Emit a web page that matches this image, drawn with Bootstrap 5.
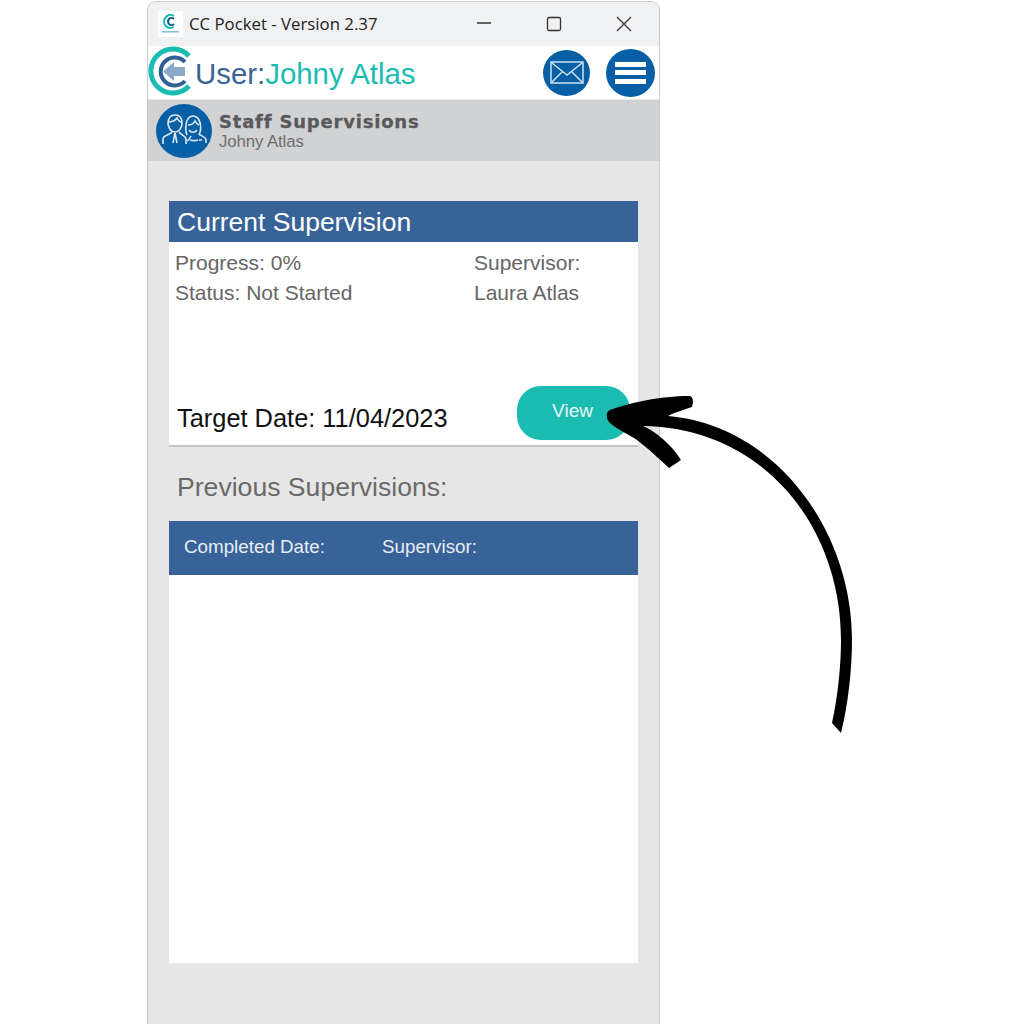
<!DOCTYPE html>
<html lang="en">
<head>
<meta charset="utf-8"/>
<meta content="width=device-width, initial-scale=1.0" name="viewport"/>
<title>CC Pocket - Version 2.37</title>
<link href="https://cdn.jsdelivr.net/npm/bootstrap@5.3.0/dist/css/bootstrap.min.css" rel="stylesheet"/>
<style>
    body {
      background-color: #fff;
      font-family: "Liberation Sans", Arial, sans-serif;
      height: 1024px;
      overflow: hidden;
    }
    .app-window {
      width: 511px;
      height: 1022px;
      margin: 2px 0 0 148px;
      background-color: #e6e6e6;
      border-radius: 8px 8px 0 0;
      box-shadow: 0 0 0 1px #cbcbcb;
      overflow: hidden;
    }
    .title-bar {
      height: 44px;
      background-color: #f0f1f3;
      padding-left: 10px;
      color: #222;
      font-family: "Open Sans", sans-serif;
      font-size: 16.8px;
    }
    .title-logo {
      width: 25px;
      height: 26px;
      background-color: #fff;
      margin-right: 6px;
    }
    .win-btn { width: 70px; height: 44px; }
    .top-head {
      height: 53px;
      background-color: #fff;
      padding-right: 4px;
    }
    .user-label { font-size: 29.4px; color: #3a6496; margin-left: 2px; padding-top: 3px; }
    .user-label span { color: #1abcb1; }
    .round-icon {
      background-color: #0760a5;
      border-radius: 50%;
      flex: none;
    }
    .sub-head {
      height: 62px;
      background-color: #d1d2d4;
      padding-left: 8px;
      border-top: 1px solid #ececec;
    }
    .sub-icon { margin-right: 7px; }
    .sub-text { padding-top: 2px; }
    .sub-title {
      font-family: "DejaVu Sans", sans-serif;
      font-weight: 700;
      font-size: 18px;
      letter-spacing: .8px;
      line-height: 20px;
      color: #58595b;
      -webkit-text-stroke: .3px #58595b;
    }
    .sub-name { font-size: 16.8px; line-height: 18px; margin-top: 1px; color: #6d6e70; letter-spacing: -.1px; }
    .page-body { padding: 40px 21px 0 21px; }
    .panel-head {
      height: 41px;
      background-color: #386398;
      color: #fff;
      font-size: 26.5px;
      padding: 2px 0 0 8px;
    }
    .panel-main {
      height: 205px;
      background-color: #fff;
      border-bottom: 2px solid #c4c4c4;
      color: #666;
      font-size: 21px;
    }
    .info-rows { padding-top: 6px; }
    .info-line { height: 30px; line-height: 30px; }
    .info-left { width: 305px; padding-left: 6px; }
    .target-date { font-size: 25.4px; color: #111; padding: 6px 0 0 8px; }
    .view-btn {
      width: 113px;
      height: 54px;
      margin: 0 8px 5px 0;
      background-color: #1abcb1;
      border: 0;
      border-radius: 24px;
      color: #e8f6f5;
      font-size: 19px;
      padding: 0 2px 4px 0;
    }
    .prev-title { font-size: 26.6px; color: #6a6a6a; margin: 24px 0 18px 8px; line-height: 32px; }
    .table-head {
      height: 54px;
      background-color: #386398;
      color: #e8edf3;
      font-size: 18.8px;
      padding: 0 0 2px 15px;
    }
    .col-completed { width: 198px; }
    .table-body { height: 388px; background-color: #fff; }
    .arrow-layer { position: absolute; left: 0; top: 0; pointer-events: none; }
</style>
</head>
<body>
<div class="app-window d-flex flex-column">
  <div class="title-bar d-flex align-items-center">
    <svg class="title-logo" viewBox="0 0 25 26">
      <path d="M16 5a6.500 6.500 0 1 0 0 11" fill="none" stroke="#1abcb1" stroke-width="2"/>
      <path d="M16 8a3.500 3.500 0 1 0 0 5" fill="none" stroke="#0a5f92" stroke-width="2"/>
      <rect x="4" y="20" width="17" height="1.500" fill="#7fc0d6"/>
    </svg>
    <span class="flex-grow-1">CC Pocket - Version 2.37</span>
    <div class="d-flex">
      <div class="win-btn d-flex align-items-center justify-content-center">
        <svg width="16" height="16" viewBox="0 0 16 16"><path d="M1 7h14" stroke="#333" stroke-width="1.300"/></svg>
      </div>
      <div class="win-btn d-flex align-items-center justify-content-center">
        <svg width="16" height="16" viewBox="0 0 16 16"><rect x="1.500" y="1.500" width="13" height="13" rx="1.500" fill="none" stroke="#333" stroke-width="1.300"/></svg>
      </div>
      <div class="win-btn d-flex align-items-center justify-content-center">
        <svg width="16" height="16" viewBox="0 0 16 16"><path d="M1 1l14 14M15 1L1 15" stroke="#333" stroke-width="1.300"/></svg>
      </div>
    </div>
  </div>
  <div class="top-head d-flex align-items-center">
    <svg width="45" height="53" viewBox="0 0 45 53" class="flex-none">
      <path d="M41 10A22 22 0 1 0 41 40" fill="none" stroke="#1abcb1" stroke-width="5"/>
      <path d="M37 16A14 14 0 1 0 37 35" fill="none" stroke="#2f5f95" stroke-width="4"/>
      <path d="M15 25.500l11-9.500v5h11v9H26v5z" fill="#8aa9cb"/>
    </svg>
    <div class="user-label flex-grow-1">User:<span>Johny Atlas</span></div>
    <svg class="round-icon me-3" width="47" height="46" viewBox="0 0 47 46">
      <rect x="8" y="12" width="32" height="21" fill="none" stroke="#cfe0ee" stroke-width="1.500"/>
      <path d="M9 13l15 12 15-12M9 32l10-10M39 32L29 22" fill="none" stroke="#cfe0ee" stroke-width="1.500"/>
    </svg>
    <svg class="round-icon" width="49" height="48" viewBox="0 0 49 48">
      <path d="M9 15.500h31M9 23.500h31M9 32.500h31" stroke="#fff" stroke-width="5"/>
    </svg>
  </div>
  <div class="sub-head d-flex align-items-center">
    <svg class="round-icon sub-icon" width="56" height="54" viewBox="0 0 56 54">
      <g fill="none" stroke="#dbe8f2" stroke-width="1.600">
        <path d="M12 20c0-6 3-9 7-9s7 2 7 8c0 5-3 9-7 9s-6-3-7-8z"/>
        <path d="M12 18c3 0 7-1 9-4 1 2 3 4 5 4"/>
        <path d="M7 40v-5c0-4 7-4 9-7M30 40v-5c0-3-5-4-7-7M19 29l-2 10M19 29l2 10"/>
        <path d="M31 31c-2-5-2-19 6-19s9 13 6 19"/>
        <path d="M32 21c3 0 6-2 7-4 1 2 2 3 4 4M33 26c2 3 6 3 8 0"/>
        <path d="M31 37c2-1 3-3 4-5M50 39v-3c0-3-5-4-7-6M34 36c3 1 5 1 8 0M43 36h3"/>
      </g>
    </svg>
    <div class="sub-text">
      <div class="sub-title">Staff Supervisions</div>
      <div class="sub-name">Johny Atlas</div>
    </div>
  </div>
  <div class="page-body">
    <div class="panel-head d-flex align-items-center">Current Supervision</div>
    <div class="panel-main d-flex flex-column">
      <div class="info-rows d-flex">
        <div class="info-left">
          <div class="info-line">Progress: 0%</div>
          <div class="info-line">Status: Not Started</div>
        </div>
        <div>
          <div class="info-line">Supervisor:</div>
          <div class="info-line">Laura Atlas</div>
        </div>
      </div>
      <div class="d-flex align-items-center justify-content-between mt-auto">
        <div class="target-date">Target Date: 11/04/2023</div>
        <button class="btn view-btn" type="button">View</button>
      </div>
    </div>
    <div class="prev-title">Previous Supervisions:</div>
    <div class="table-head d-flex align-items-center">
      <div class="col-completed">Completed Date:</div>
      <div>Supervisor:</div>
    </div>
    <div class="table-body"></div>
  </div>
</div>
<svg class="arrow-layer" width="1024" height="1024" viewBox="0 0 1024 1024">
  <path d="M607 417C606 412 609 410 613 409C630 403 660 396 689 396C692 396 693 399 693 402L692 407C684 410 675 412 668 416C775 425 852 530 852 640C852 670 848 705 841 733L832 723C838 695 841 665 841 640C841 528 765 428 643 426C655 431 672 445 681 460L669 468C658 458 650 450 637 440C628 434 618 430 610 423C608 421 607 419 607 417Z" fill="#000"/>
</svg>
<script src="https://cdn.jsdelivr.net/npm/bootstrap@5.3.0/dist/js/bootstrap.bundle.min.js"></script>
</body>
</html>
